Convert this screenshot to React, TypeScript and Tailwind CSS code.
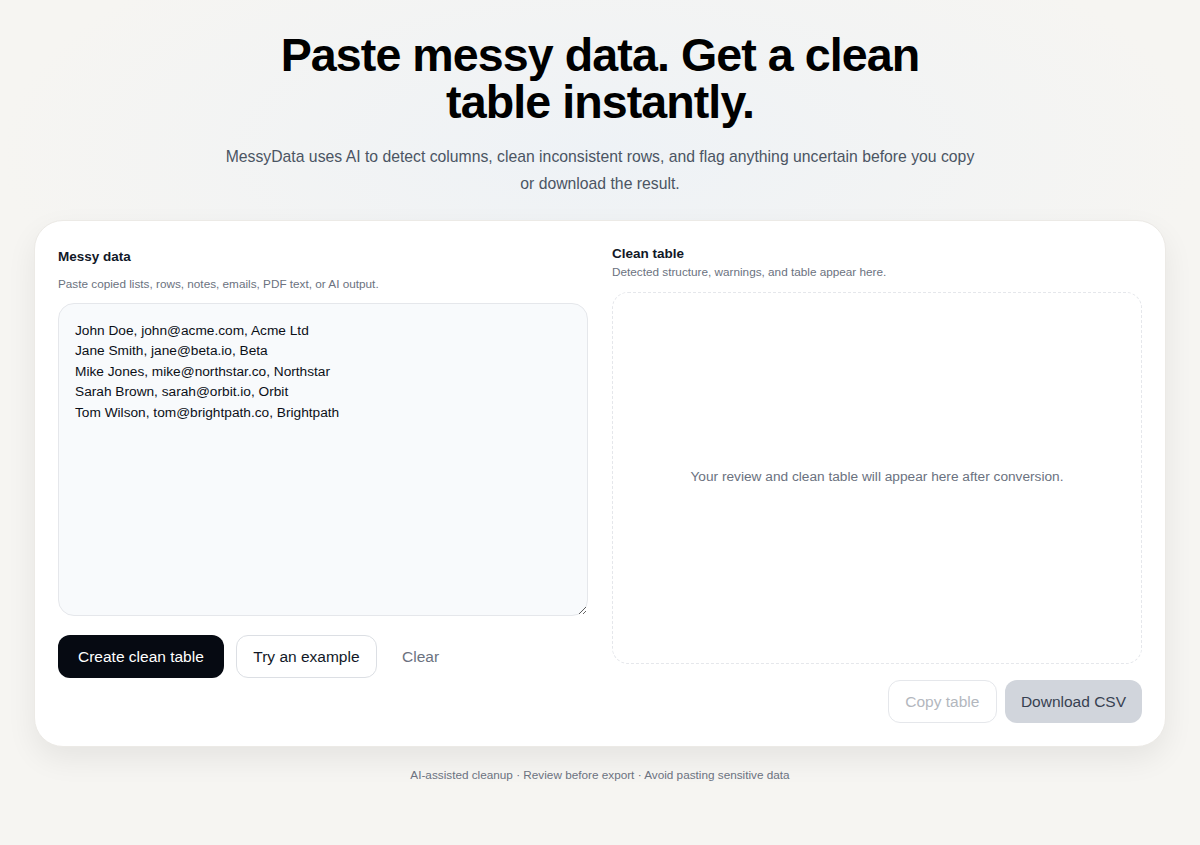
const sample = `John Doe, john@acme.com, Acme Ltd
Jane Smith, jane@beta.io, Beta
Mike Jones, mike@northstar.co, Northstar
Sarah Brown, sarah@orbit.io, Orbit
Tom Wilson, tom@brightpath.co, Brightpath`;

export default function App() {
  return (
    <div className="min-h-screen bg-[#f6f5f2] bg-[radial-gradient(ellipse_50%_30%_at_50%_18%,#eef2f6,transparent)] font-['Liberation_Sans',Arial,sans-serif] text-[#0b0f17]">
      <div className="mx-auto flex w-[1132px] flex-col items-center pt-[32px]">
        <h1 className="max-w-[700px] text-center text-[46.6px] font-bold leading-[46.7px] tracking-[-0.02em] text-black">
          Paste messy data. Get a clean table instantly.
        </h1>
        <p className="mt-[19px] max-w-[756px] text-center text-[15.75px] leading-[26.7px] text-[#4b5563]">
          MessyData uses AI to detect columns, clean inconsistent rows, and flag anything uncertain before you copy or download the result.
        </p>

        <div className="mt-[22px] grid w-full grid-cols-2 gap-6 rounded-[29px] border border-[#eceae6] bg-white px-[23px] pb-[23px] pt-[24px] shadow-[0_12px_30px_rgba(0,0,0,0.07)]">
          <div className="flex flex-col pt-[2.7px]">
            <h2 className="text-[13.5px] font-bold leading-[18px] text-[#111827]">Messy data</h2>
            <p className="mt-[10.3px] text-[11.75px] leading-[16px] text-[#6b7280]">
              Paste copied lists, rows, notes, emails, PDF text, or AI output.
            </p>
            <textarea
              defaultValue={sample}
              className="mt-[11.3px] h-[313px] w-full resize-y rounded-2xl border border-[#e5e7eb] bg-[#f8fafc] px-4 pt-[16.5px] text-[13.7px] leading-[20.5px] text-[#0b0f17] outline-none"
            />
            <div className="mt-[19.3px] flex items-center gap-3">
              <button className="h-[43px] rounded-xl bg-[#060a12] px-5 text-[15.5px] text-white">
                Create clean table
              </button>
              <button className="h-[43px] rounded-xl border border-[#dcdfe4] bg-white px-[16.5px] text-[15.5px] text-[#111827]">
                Try an example
              </button>
              <button className="h-[43px] px-[13px] text-[15.5px] text-[#6b7280]">Clear</button>
            </div>
          </div>

          <div className="flex flex-col">
            <h2 className="text-[13.5px] font-bold leading-[18px] text-[#111827]">Clean table</h2>
            <p className="mt-[1px] text-[11.75px] leading-[16px] text-[#6b7280]">
              Detected structure, warnings, and table appear here.
            </p>
            <div className="mt-[11.7px] flex h-[372px] items-center justify-center rounded-2xl border border-dashed border-[#e5e7eb] text-[13.7px] text-[#6b7280]">
              Your review and clean table will appear here after conversion.
            </div>
            <div className="mt-[16.7px] flex justify-end gap-2">
              <button className="h-[42.5px] rounded-xl border border-[#e5e7eb] bg-white px-[16.5px] text-[15.5px] text-[#b3b7be]">
                Copy table
              </button>
              <button className="h-[42.5px] rounded-xl bg-[#d1d5dc] px-4 text-[15.5px] text-[#374151]">
                Download CSV
              </button>
            </div>
          </div>
        </div>

        <p className="mt-[19px] text-[11.75px] leading-[17px] text-[#6b7280]">
          AI-assisted cleanup · Review before export · Avoid pasting sensitive data
        </p>
      </div>
    </div>
  );
}
